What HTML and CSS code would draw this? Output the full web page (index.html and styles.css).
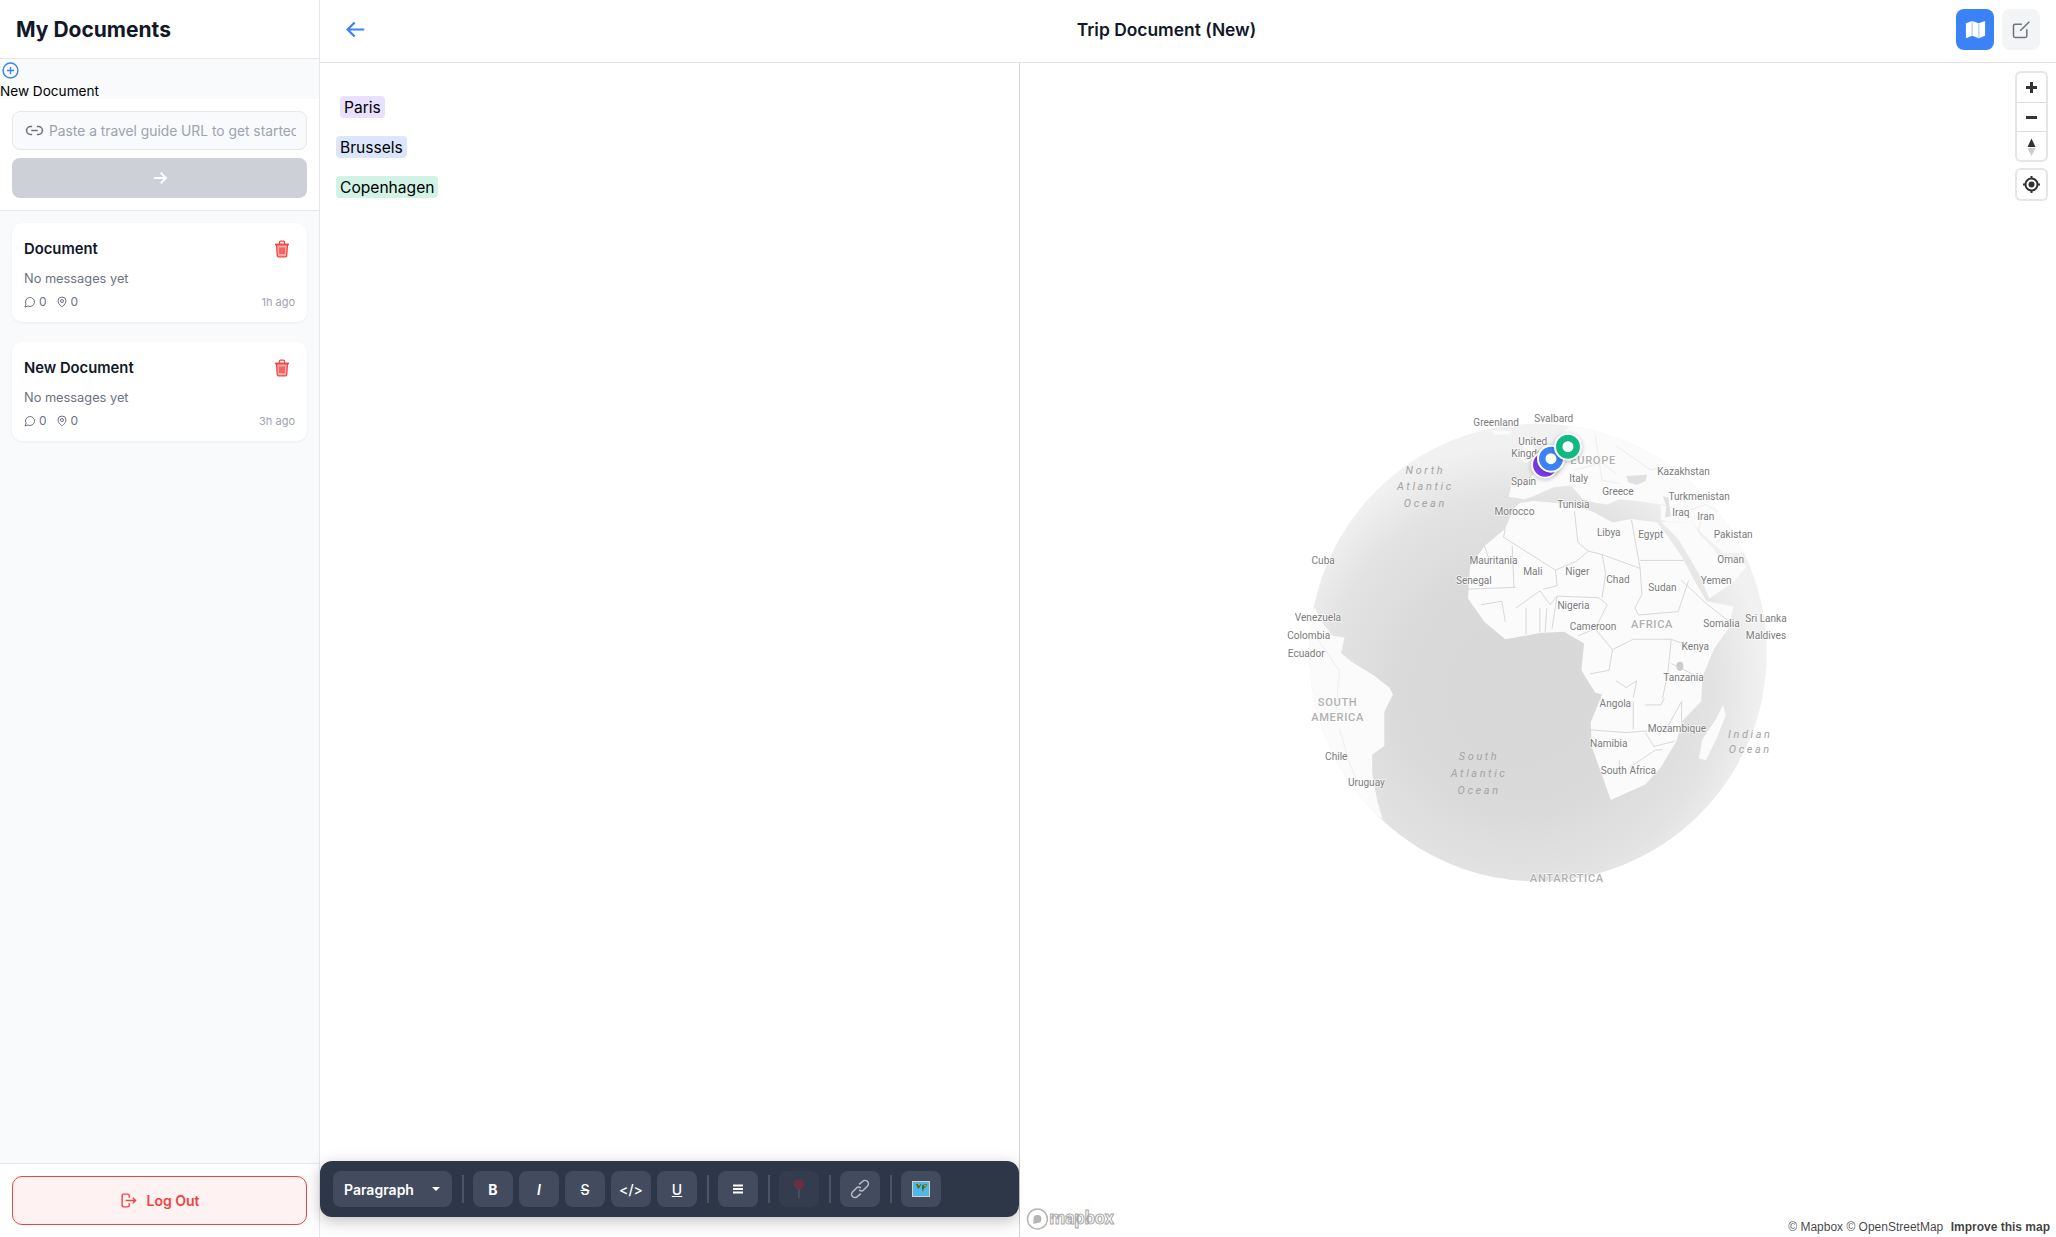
FILE: index.html
```html
<!DOCTYPE html>
<html>
    <head>
        <meta charset="utf-8">
        <title>Trip Document (New)</title>
        <link rel="stylesheet" href="styles.css">
    </head>

    <body>

        <div class="sideBar">

            <div class="sideHead">My Documents</div>

            <div class="newDoc">
                <svg class="plusIcon" viewBox="0 0 24 24"><circle cx="12" cy="12" r="10.5"/><path d="M12 7v10M7 12h10"/></svg>
                <div class="newDocText">New Document</div>
            </div>

            <div class="urlBox">
                <div class="urlInput">
                    <svg class="linkIcon" viewBox="0 0 24 24"><path d="M9 17H7A5 5 0 0 1 7 7h2M15 7h2a5 5 0 1 1 0 10h-2M8 12h8"/></svg>
                    <input class="urlField" type="text" placeholder="Paste a travel guide URL to get started">
                </div>
                <button class="goButton">
                    <svg class="goIcon" viewBox="0 0 24 24"><path d="M4 12h16M13 5l7 7-7 7"/></svg>
                </button>
            </div>

            <div class="docList">

                <div class="docCard">
                    <div class="cardTop">
                        <div class="cardTitle">Document</div>
                        <svg class="trashIcon" viewBox="0 0 16 18"><path class="trashBody" d="M2.5 4.5h11l-.8 11.2a1.2 1.2 0 0 1-1.2 1.1h-7a1.2 1.2 0 0 1-1.2-1.1z"/><path d="M1 4.5h14M5.5 4.5V2.2a1 1 0 0 1 1-1h3a1 1 0 0 1 1 1v2.3M6 7.5v6.5M8 7.5v6.5M10 7.5v6.5"/></svg>
                    </div>
                    <div class="cardText">No messages yet</div>
                    <div class="cardBottom">
                        <div class="cardCounts">
                            <svg class="countIcon" viewBox="0 0 24 24"><path d="M7.9 20A9 9 0 1 0 4 16.1L2 22Z"/></svg>
                            <span class="countNum">0</span>
                            <svg class="countIcon pinGap" viewBox="0 0 24 24"><path d="M20 10c0 6-8 12-8 12s-8-6-8-12a8 8 0 0 1 16 0Z"/><circle cx="12" cy="10" r="3"/></svg>
                            <span class="countNum">0</span>
                        </div>
                        <div class="cardTime">1h ago</div>
                    </div>
                </div>

                <div class="docCard">
                    <div class="cardTop">
                        <div class="cardTitle">New Document</div>
                        <svg class="trashIcon" viewBox="0 0 16 18"><path class="trashBody" d="M2.5 4.5h11l-.8 11.2a1.2 1.2 0 0 1-1.2 1.1h-7a1.2 1.2 0 0 1-1.2-1.1z"/><path d="M1 4.5h14M5.5 4.5V2.2a1 1 0 0 1 1-1h3a1 1 0 0 1 1 1v2.3M6 7.5v6.5M8 7.5v6.5M10 7.5v6.5"/></svg>
                    </div>
                    <div class="cardText">No messages yet</div>
                    <div class="cardBottom">
                        <div class="cardCounts">
                            <svg class="countIcon" viewBox="0 0 24 24"><path d="M7.9 20A9 9 0 1 0 4 16.1L2 22Z"/></svg>
                            <span class="countNum">0</span>
                            <svg class="countIcon pinGap" viewBox="0 0 24 24"><path d="M20 10c0 6-8 12-8 12s-8-6-8-12a8 8 0 0 1 16 0Z"/><circle cx="12" cy="10" r="3"/></svg>
                            <span class="countNum">0</span>
                        </div>
                        <div class="cardTime">3h ago</div>
                    </div>
                </div>

            </div>

            <div class="logoutBox">
                <button class="logoutButton">
                    <svg class="logoutIcon" viewBox="0 0 24 24"><path d="M13 8V5a2 2 0 0 0-2-2H5a2 2 0 0 0-2 2v14a2 2 0 0 0 2 2h6a2 2 0 0 0 2-2v-3M8 12h14M18 8l4 4-4 4"/></svg>
                    Log Out
                </button>
            </div>

        </div>

        <div class="mainArea">

            <div class="topBar">
                <button class="backButton">
                    <svg class="backIcon" viewBox="0 0 24 24"><path d="M22 12H3M11 4l-8 8 8 8"/></svg>
                </button>
                <div class="pageTitle">Trip Document (New)</div>
                <div class="topActions">
                    <button class="topButton topButtonOn">
                        <svg class="mapIcon" viewBox="0 0 24 24"><path class="mapSheet" d="M2 5.5 8.5 3l7 2.5L22 3v15.500l-6.500 2.500-7-2.500L2 21z"/><path class="mapFold" d="M8.5 3v15.500M15.500 5.500V21"/></svg>
                    </button>
                    <button class="topButton">
                        <svg class="editIcon" viewBox="0 0 24 24"><path d="M13 5H5a2 2 0 0 0-2 2v12a2 2 0 0 0 2 2h12a2 2 0 0 0 2-2v-8M22 2 11 13"/></svg>
                    </button>
                </div>
            </div>

            <div class="paneRow">

                <div class="editorPane">
                    <div class="editorBody">
                        <span class="placeTag tagPurple">Paris</span>
                        <span class="placeTag tagBlue">Brussels</span>
                        <span class="placeTag tagGreen">Copenhagen</span>
                    </div>

                    <div class="toolBar">
                        <button class="toolButton paragraphButton">Paragraph<span class="caret"></span></button>
                        <span class="toolSep"></span>
                        <button class="toolButton boldText">B</button>
                        <button class="toolButton italicText">I</button>
                        <button class="toolButton strikeText">S</button>
                        <button class="toolButton codeText">&lt;/&gt;</button>
                        <button class="toolButton underText">U</button>
                        <span class="toolSep"></span>
                        <button class="toolButton">
                            <svg class="toolIcon" viewBox="0 0 14 14"><path class="alignLines" d="M2 3.500h10M2 7h10M2 10.500h10"/></svg>
                        </button>
                        <span class="toolSep"></span>
                        <button class="toolButton toolOff">
                            <svg class="pinEmoji" viewBox="0 0 20 28"><path class="pinStem" d="M10 12v14"/><circle class="pinHead" cx="10" cy="8" r="6.500"/></svg>
                        </button>
                        <span class="toolSep"></span>
                        <button class="toolButton">
                            <svg class="chainEmoji" viewBox="0 0 24 24"><path d="M11 6.500 15 3a4 4 0 0 1 6 5.500l-4.500 4.500a4 4 0 0 1-5.500 0M13 17.500 9 21a4 4 0 0 1-6-5.500L7.500 11a4 4 0 0 1 5.500 0"/></svg>
                        </button>
                        <span class="toolSep"></span>
                        <button class="toolButton">
                            <svg class="mapEmoji" viewBox="0 0 20 20">
                                <rect x="1" y="2" width="18" height="16" fill="#d8d2c4"/>
                                <rect x="2" y="3" width="16" height="14" fill="#4fb8e8"/>
                                <path d="M5 5h5l-1 3-2 2zM11 6l5-1-1 3-2 1-1 4-1-3z" fill="#4a6b1e"/>
                                <path d="M7 5h2l-1 2zM13 6h2l-1 2z" fill="#e6c13a"/>
                            </svg>
                        </button>
                    </div>
                </div>

                <div class="mapPane">

                    <svg class="globeMap" viewBox="1020 62 1036 1175">
                        <defs>
                            <radialGradient id="oceanFade" gradientUnits="userSpaceOnUse" cx="1520" cy="690" r="245">
                                <stop offset="0" stop-color="#d7d7d7"/>
                                <stop offset="0.5" stop-color="#dadada"/>
                                <stop offset="0.8" stop-color="#e3e3e3"/>
                                <stop offset="1" stop-color="#f1f1f1"/>
                            </radialGradient>
                            <clipPath id="globeClip">
                                <circle cx="1538" cy="652" r="229"/>
                            </clipPath>
                        </defs>

                        <circle cx="1538" cy="652" r="229" fill="url(#oceanFade)"/>

                        <g clip-path="url(#globeClip)">
                            <g transform="translate(1270 400) scale(.346)">
                                <path class="land" d="M722 296 760 290 830 296 880 302 935 322 990 352 1045 342 1120 352 1150 392 1190 450 1230 525 1262 580 1340 595 1325 660 1285 715 1250 800 1247 869 1190 929 1175 985 1130 1060 1085 1110 985 1155 962 1090 930 1000 927 930 960 850 940 845 900 780 908 702 850 668 780 672 680 690 620 640 572 572 578 480 620 420 680 370 703 315Z"/>
                                <path class="land" d="M690 278 700 232 755 225 772 190 800 165 826 150 838 100 880 60 1600 0 1600 440 1420 440 1350 440 1310 440 1240 375 1225 355 1150 350 1130 345 1130 300 1060 290 1010 285 975 300 940 295 905 285 870 245 820 250 765 275 735 285Z"/>
                                <path class="land" d="M1130 350 1180 400 1240 500 1270 572 1340 525 1378 478 1330 450 1300 452 1280 425 1240 385 1225 355Z"/>
                                <path class="land" d="M735 120 755 115 770 165 740 180 725 170Z"/>
                                <path class="land" d="M1310 880 1318 910 1290 980 1260 1040 1240 1034 1250 980 1290 920Z"/>
                                <path class="land" d="M60 600 130 600 150 640 180 680 215 685 205 730 235 755 300 795 345 830 355 850 330 900 330 999 295 1024 295 1079 310 1159 325 1210 150 1100 60 1000Z"/>
                                <path class="land" d="M640 85 700 88 690 98 650 98Z"/>

                                <path class="innerSea" d="M1030 218 1090 214 1086 232 1060 244 1036 236Z"/>
                                <path class="innerSea" d="M1136 276 1152 280 1158 334 1142 338 1146 306Z"/>
                                <ellipse class="innerLake" cx="1185" cy="768" rx="10" ry="13"/>

                                <path class="border" d="M680 370 675 395 825 490 830 535 790 545M700 420 705 540M620 420 635 465M570 545 710 540M825 490 885 465 920 435 960 445 970 500 960 570M880 320 890 410 920 435M1045 345 1070 485 960 445M1070 485 1075 560 1055 600 1065 620M1070 462 1195 462M1065 620 1180 610 1210 520M830 565 950 570 975 590 940 660 890 680M830 565 815 660M740 600 740 675M780 600 780 670M800 600 795 670M610 590 670 580 680 640M710 600 780 550 810 590 830 565M1190 520 1265 590 1330 640M1240 720 1160 690 1150 790 1135 860M940 660 990 720 1050 690 1160 690M990 720 980 780 925 790M1160 760 1240 800M925 952 1030 960 1090 955M1050 870 1050 950M1085 880 1130 880 1140 860M1010 1040 1010 1070M1040 1060 1115 1010 1135 1010M1085 960 1110 1000 1170 985M1000 810 1030 830 1060 810 1050 860M1140 960 1190 870 1190 930"/>
                                <path class="borderFaint" d="M1000 130 1100 200 1160 190 1240 210M940 100 960 230 1010 240M880 200 960 180 1000 210M1130 300 1200 320 1260 300 1330 340M1240 375 1250 320M1290 410 1330 380 1380 420M130 680 200 780 190 900M200 950 230 1050 260 1120"/>
                            </g>
                        </g>

                        <g transform="scale(1.3112)">
                            <text class="mapLabel" x="1141" y="322">Greenland</text>
                            <text class="mapLabel" x="1185" y="319">Svalbard</text>
                            <text class="mapLabel" x="1169" y="337">United</text>
                            <text class="mapLabel" x="1168" y="346">Kingdom</text>
                            <text class="mapBig" x="1215" y="351">EUROPE</text>
                            <text class="mapLabel" x="1284" y="360">Kazakhstan</text>
                            <text class="mapLabel" x="1162" y="367">Spain</text>
                            <text class="mapLabel" x="1204" y="365">Italy</text>
                            <text class="mapLabel" x="1234" y="375">Greece</text>
                            <text class="mapLabel" x="1296" y="379">Turkmenistan</text>
                            <text class="mapLabel" x="1200" y="385">Tunisia</text>
                            <text class="mapLabel" x="1155" y="390">Morocco</text>
                            <text class="mapLabel" x="1282" y="391">Iraq</text>
                            <text class="mapLabel" x="1301" y="394">Iran</text>
                            <text class="mapLabel" x="1227" y="406">Libya</text>
                            <text class="mapLabel" x="1259" y="408">Egypt</text>
                            <text class="mapLabel" x="1322" y="408">Pakistan</text>
                            <text class="mapLabel" x="1320" y="427">Oman</text>
                            <text class="mapLabel" x="1009" y="428">Cuba</text>
                            <text class="mapLabel" x="1139" y="428">Mauritania</text>
                            <text class="mapLabel" x="1169" y="436">Mali</text>
                            <text class="mapLabel" x="1203" y="436">Niger</text>
                            <text class="mapLabel" x="1234" y="442">Chad</text>
                            <text class="mapLabel" x="1124" y="443">Senegal</text>
                            <text class="mapLabel" x="1309" y="443">Yemen</text>
                            <text class="mapLabel" x="1268" y="448">Sudan</text>
                            <text class="mapLabel" x="1200" y="462">Nigeria</text>
                            <text class="mapLabel" x="1005" y="471">Venezuela</text>
                            <text class="mapLabel" x="1347" y="472">Sri Lanka</text>
                            <text class="mapLabel" x="1313" y="476">Somalia</text>
                            <text class="mapLabel" x="1215" y="478">Cameroon</text>
                            <text class="mapBig" x="1260" y="476">AFRICA</text>
                            <text class="mapLabel" x="998" y="485">Colombia</text>
                            <text class="mapLabel" x="1347" y="485">Maldives</text>
                            <text class="mapLabel" x="1293" y="493">Kenya</text>
                            <text class="mapLabel" x="996" y="499">Ecuador</text>
                            <text class="mapLabel" x="1284" y="517">Tanzania</text>
                            <text class="mapBig" x="1020" y="536">SOUTH</text>
                            <text class="mapBig" x="1020" y="547">AMERICA</text>
                            <text class="mapLabel" x="1232" y="537">Angola</text>
                            <text class="mapLabel" x="1279" y="556">Mozambique</text>
                            <text class="mapLabel" x="1227" y="567">Namibia</text>
                            <text class="mapLabel" x="1019" y="577">Chile</text>
                            <text class="mapLabel" x="1242" y="588">South Africa</text>
                            <text class="mapLabel" x="1042" y="597">Uruguay</text>
                            <text class="mapBig" x="1195" y="670">ANTARCTICA</text>

                            <text class="mapOcean" x="1087" y="359">North</text>
                            <text class="mapOcean" x="1087" y="371">Atlantic</text>
                            <text class="mapOcean" x="1087" y="384">Ocean</text>
                            <text class="mapOcean" x="1128" y="577">South</text>
                            <text class="mapOcean" x="1128" y="590">Atlantic</text>
                            <text class="mapOcean" x="1128" y="603">Ocean</text>
                            <text class="mapOcean" x="1335" y="560">Indian</text>
                            <text class="mapOcean" x="1335" y="572">Ocean</text>
                        </g>

                        <g class="mapPins">
                            <circle class="pinRing" cx="1545" cy="464" r="13" fill="#7c3aed"/>
                            <circle class="pinRing" cx="1551" cy="458" r="13" fill="#3b82f6"/>
                            <circle class="pinDot" cx="1551" cy="458" r="5.500"/>
                            <circle class="pinRing" cx="1568" cy="446" r="13" fill="#10b981"/>
                            <circle class="pinDot" cx="1568" cy="446" r="5.500"/>
                        </g>

                        <g class="mapLogo">
                            <circle cx="1037" cy="1219" r="10"/>
                            <path d="M1033 1224v-5a4 4 0 1 1 4 4z"/>
                            <text class="logoText" x="1049" y="1224">mapbox</text>
                        </g>
                    </svg>

                    <div class="mapControls">
                        <div class="ctrlGroup">
                            <button class="ctrlButton">
                                <svg class="ctrlIcon" viewBox="0 0 29 29"><path class="ctrlThick" d="M14.500 9v11M9 14.500h11"/></svg>
                            </button>
                            <button class="ctrlButton">
                                <svg class="ctrlIcon" viewBox="0 0 29 29"><path class="ctrlThick" d="M9 14.500h11"/></svg>
                            </button>
                            <button class="ctrlButton">
                                <svg class="ctrlIcon" viewBox="0 0 29 29"><path fill="#333" d="M14.500 6.500l4 8.500h-8z"/><path fill="#ccc" d="M14.500 24l4-8h-8z"/></svg>
                            </button>
                        </div>
                        <div class="ctrlGroup">
                            <button class="ctrlButton">
                                <svg class="ctrlIcon" viewBox="0 0 29 29"><circle class="ctrlRing" cx="14.500" cy="14.500" r="6"/><circle fill="#333" cx="14.500" cy="14.500" r="3"/><path class="ctrlThin" d="M14.500 6v3M14.500 20v3M6 14.500h3M20 14.500h3"/></svg>
                            </button>
                        </div>
                    </div>

                    <div class="attrib">© Mapbox © OpenStreetMap <b class="attribLink">Improve this map</b></div>

                </div>

            </div>

        </div>

    </body>

</html>
```

FILE: styles.css
```css
* {
    box-sizing: border-box;
}

body {
    margin: 0;
    height: 100vh;
    display: flex;
    overflow: hidden;
    background-color: white;
    font-family: "Inter", "Liberation Sans", sans-serif;
    color: black;
}

button {
    font-family: inherit;
    border: none;
    padding: 0;
    display: flex;
    align-items: center;
    justify-content: center;
}

svg {
    display: block;
    flex: none;
}

/* left column */

.sideBar {
    width: 320px;
    flex: none;
    display: flex;
    flex-direction: column;
    border-right: 1px solid #e5e7eb;
    background-color: #f9fafb;
}

.sideHead {
    height: 59px;
    padding: 0 16px;
    display: flex;
    align-items: center;
    font-size: 21px;
    font-weight: 700;
    color: #111827;
    background-color: white;
    border-bottom: 1px solid #e5e7eb;
}

.newDoc {
    height: 40px;
    padding-top: 3px;
    font-size: 13.6px;
    line-height: 17px;
}

.plusIcon {
    width: 17px;
    height: 17px;
    margin-left: 2px;
    fill: none;
    stroke: #3b82f6;
    stroke-width: 2;
}

.newDocText {
    margin-top: 4px;
}

.urlBox {
    padding: 12px 12px;
    height: 112px;
    background-color: white;
    border-bottom: 1px solid #e5e7eb;
}

.urlInput {
    height: 39px;
    padding: 0 10px 0 12px;
    display: flex;
    align-items: center;
    gap: 5px;
    background-color: #f9fafb;
    border: 1px solid #e5e7eb;
    border-radius: 8px;
}

.linkIcon {
    width: 19px;
    height: 19px;
    fill: none;
    stroke: #6b7280;
    stroke-width: 2;
}

.urlField {
    flex: 1;
    min-width: 0;
    border: none;
    outline: none;
    padding: 0;
    background: none;
    font-family: inherit;
    font-size: 13.8px;
}

.urlField::placeholder {
    color: #9ca3af;
    opacity: 1;
}

.goButton {
    width: 100%;
    height: 40px;
    margin-top: 8px;
    background-color: #cdd0d6;
    border-radius: 8px;
}

.goIcon {
    width: 18px;
    height: 18px;
    fill: none;
    stroke: white;
    stroke-width: 2.500;
}

.docList {
    flex: 1;
    padding: 12px;
    display: flex;
    flex-direction: column;
    gap: 20px;
}

.docCard {
    height: 99px;
    padding: 12px;
    background-color: white;
    border-radius: 10px;
    box-shadow: 0 1px 3px rgba(0, 0, 0, 0.06);
}

.cardTop {
    display: flex;
    align-items: center;
    justify-content: space-between;
    height: 28px;
    padding-right: 5px;
}

.cardTitle {
    font-size: 14.8px;
    font-weight: 600;
    color: #111827;
}

.trashIcon {
    width: 16px;
    height: 18px;
    margin-top: -1px;
    fill: none;
    stroke: #ef4444;
    stroke-width: 1.300;
}

.trashBody {
    fill: #fca5a5;
    stroke: #ef4444;
}

.cardText {
    margin-top: 8px;
    font-size: 12.8px;
    line-height: 16px;
    color: #6b7280;
}

.cardBottom {
    display: flex;
    align-items: center;
    justify-content: space-between;
    margin-top: 7px;
}

.cardCounts {
    display: flex;
    align-items: center;
    gap: 3px;
    font-size: 12px;
    line-height: 16px;
    color: #6b7280;
}

.countIcon {
    width: 12px;
    height: 12px;
    fill: none;
    stroke: #6b7280;
    stroke-width: 2;
}

.pinGap {
    margin-left: 6px;
}

.cardTime {
    font-size: 11px;
    color: #9ca3af;
}

.logoutBox {
    height: 74px;
    padding: 12px;
    background-color: white;
    border-top: 1px solid #e5e7eb;
}

.logoutButton {
    width: 100%;
    height: 49px;
    gap: 10px;
    background-color: #fef2f2;
    border: 1px solid #ef4444;
    border-radius: 10px;
    font-size: 14px;
    font-weight: 600;
    color: #ef4444;
}

.logoutIcon {
    width: 17px;
    height: 17px;
    fill: none;
    stroke: #ef4444;
    stroke-width: 2;
}

/* top bar */

.mainArea {
    flex: 1;
    min-width: 0;
    display: flex;
    flex-direction: column;
}

.topBar {
    height: 63px;
    flex: none;
    padding: 0 16px 3px;
    display: flex;
    align-items: center;
    justify-content: space-between;
    border-bottom: 1px solid #e5e5e5;
}

.backButton {
    width: 41px;
    height: 36px;
    padding-right: 5px;
    padding-left: 3px;
    background: none;
}

.backIcon {
    width: 21px;
    height: 21px;
    fill: none;
    stroke: #3b82f6;
    stroke-width: 2.500;
}

.pageTitle {
    font-size: 17.4px;
    font-weight: 600;
    color: #111827;
}

.topActions {
    display: flex;
    gap: 8px;
}

.topButton {
    width: 38px;
    height: 41px;
    background-color: #f3f4f6;
    border-radius: 8px;
}

.topButtonOn {
    background-color: #3b82f6;
}

.mapIcon {
    width: 23px;
    height: 23px;
}

.mapSheet {
    fill: white;
}

.mapFold {
    fill: none;
    stroke: #a9c9fb;
    stroke-width: 1.200;
}

.editIcon {
    width: 20px;
    height: 20px;
    fill: none;
    stroke: #6b7280;
    stroke-width: 1.800;
}

/* editor */

.paneRow {
    flex: 1;
    min-height: 0;
    display: flex;
}

.editorPane {
    width: 700px;
    flex: none;
    display: flex;
    flex-direction: column;
    border-right: 1px solid #d1d5db;
}

.editorBody {
    flex: 1;
    padding: 33px 16px 0;
    display: flex;
    flex-direction: column;
    align-items: flex-start;
    gap: 18px;
}

.placeTag {
    height: 22px;
    padding: 1px 4px 0;
    font-size: 15.6px;
    line-height: 21px;
    border-radius: 4px;
}

.tagPurple {
    margin-left: 4px;
    background-color: #e9e0fd;
}

.tagBlue {
    background-color: #dbe6fd;
}

.tagGreen {
    background-color: #d1f3e5;
}

.toolBar {
    height: 56px;
    margin-bottom: 20px;
    padding: 0 13px;
    display: flex;
    align-items: center;
    gap: 6px;
    background-color: #2d3748;
    border-radius: 12px;
    box-shadow: 0 4px 16px rgba(0, 0, 0, 0.25);
}

.toolButton {
    width: 40px;
    height: 36px;
    background-color: #424c5e;
    border-radius: 8px;
    color: white;
    font-size: 14px;
    font-weight: 600;
}

.paragraphButton {
    width: 119px;
    padding: 0 12px 0 11px;
    justify-content: space-between;
}

.caret {
    width: 0;
    height: 0;
    border-left: 4px solid transparent;
    border-right: 4px solid transparent;
    border-top: 4px solid white;
}

.toolSep {
    width: 2px;
    height: 28px;
    margin: 0 3.500px;
    background-color: #4a5568;
}

.boldText {
    font-weight: 700;
}

.italicText {
    font-style: italic;
}

.strikeText {
    text-decoration: line-through;
    font-weight: 500;
}

.codeText {
    font-weight: 500;
}

.underText {
    text-decoration: underline;
    font-weight: 500;
}

.toolIcon {
    width: 14px;
    height: 14px;
}

.alignLines {
    fill: none;
    stroke: white;
    stroke-width: 1.800;
}

.toolOff {
    opacity: 0.4;
    background-color: #3e4758;
}

.pinEmoji {
    width: 16px;
    height: 22px;
}

.pinStem {
    fill: none;
    stroke: #8a8f99;
    stroke-width: 1.500;
}

.pinHead {
    fill: #c0263a;
}

.chainEmoji {
    width: 20px;
    height: 20px;
    fill: none;
    stroke: #b8bdc5;
    stroke-width: 1.800;
}

.mapEmoji {
    width: 20px;
    height: 20px;
}

/* map */

.mapPane {
    flex: 1;
    min-width: 0;
    position: relative;
    background-color: white;
}

.globeMap {
    position: absolute;
    top: 0;
    left: 0;
    width: 100%;
    height: 100%;
}

.land {
    fill: #fbfbfb;
}

.innerSea {
    fill: #e0e0e0;
}

.innerLake {
    fill: #cbcbcb;
}

.border {
    fill: none;
    stroke: #d2d2d2;
    stroke-width: 2.500;
    stroke-linejoin: round;
}

.borderFaint {
    fill: none;
    stroke: #e6e6e6;
    stroke-width: 2;
}

.mapLabel,
.mapBig,
.mapOcean {
    font-family: "Roboto", "Liberation Sans", sans-serif;
    text-anchor: middle;
    dominant-baseline: middle;
    paint-order: stroke;
    stroke: rgba(255, 255, 255, 0.8);
    stroke-width: 1px;
}

.mapLabel {
    font-size: 7.700px;
    fill: #7b7b7b;
}

.mapBig {
    font-size: 8.500px;
    font-weight: 500;
    letter-spacing: 0.500px;
    fill: #b0b0b0;
}

.mapOcean {
    font-size: 8.300px;
    font-style: italic;
    letter-spacing: 2px;
    fill: #a3a3a3;
    stroke: none;
}

.pinRing {
    stroke: white;
    stroke-width: 2px;
    filter: drop-shadow(0 1px 2px rgba(0, 0, 0, 0.25));
}

.pinDot {
    fill: white;
}

.mapLogo circle {
    fill: white;
    stroke: #b5b5b5;
    stroke-width: 1.500;
}

.mapLogo path {
    fill: #b5b5b5;
}

.logoText {
    font-family: "Roboto", "Liberation Sans", sans-serif;
    font-size: 18px;
    font-weight: 700;
    fill: white;
    stroke: #a8a8a8;
    stroke-width: 1px;
}

.mapControls {
    position: absolute;
    top: 10px;
    right: 10px;
    display: flex;
    flex-direction: column;
    gap: 10px;
}

.ctrlGroup {
    width: 29px;
    background-color: white;
    border-radius: 4px;
    box-shadow: 0 0 0 2px rgba(0, 0, 0, 0.1);
}

.ctrlButton {
    width: 29px;
    height: 29px;
    background: none;
}

.ctrlButton + .ctrlButton {
    border-top: 1px solid #ddd;
}

.ctrlIcon {
    width: 29px;
    height: 29px;
}

.ctrlThick {
    fill: none;
    stroke: #333;
    stroke-width: 3;
}

.ctrlRing {
    fill: none;
    stroke: #333;
    stroke-width: 2;
}

.ctrlThin {
    fill: none;
    stroke: #333;
    stroke-width: 2;
}

.attrib {
    position: absolute;
    right: 6px;
    bottom: 3px;
    font-family: "Liberation Sans", sans-serif;
    font-size: 12px;
    line-height: 14px;
    white-space: pre;
    color: rgba(0, 0, 0, 0.75);
}

.attribLink {
    margin-left: 4px;
}
```
